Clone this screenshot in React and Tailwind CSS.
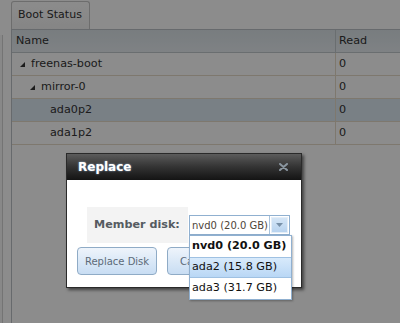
import React from "react";

const ROWS = [
  { name: "freenas-boot", level: 0, expander: true, read: "0" },
  { name: "mirror-0", level: 1, expander: true, read: "0" },
  { name: "ada0p2", level: 2, expander: false, read: "0", selected: true },
  { name: "ada1p2", level: 2, expander: false, read: "0" },
];

const DISKS = ["nvd0 (20.0 GB)", "ada2 (15.8 GB)", "ada3 (31.7 GB)"];

function Expander() {
  return (
    <svg width="5" height="5" viewBox="0 0 5 5" className="shrink-0">
      <polygon points="5,0 5,5 0,5" fill="#333" />
    </svg>
  );
}

function TreeRow({ row }) {
  const indent = ["pl-[8px]", "pl-[18px]", "pl-[38px]"][row.level];
  return (
    <div
      className={`flex h-[23px] border-b border-[#e5dac8] ${row.selected ? "bg-[#dde9f3]" : "bg-white"}`}
    >
      <div className={`flex items-center gap-[6px] w-[324px] border-r border-[#e5dac8] ${indent}`}>
        {row.expander && <Expander />}
        <span>{row.name}</span>
      </div>
      <div className="flex items-center pl-[3px]">{row.read}</div>
    </div>
  );
}

export default function App() {
  return (
    <div className="w-[407px] h-[334px] bg-white">
      <div className="relative w-[400px] h-[323px] bg-white overflow-hidden font-['DejaVu_Sans',sans-serif] text-[11.2px] text-[#333]">
        <div className="flex h-full">
          {/* left pane edge */}
          <div className="w-[11px] shrink-0 pt-[35px] flex">
            <div className="w-[3px] h-full bg-[#f7f7f7] border-r border-[#d4d4d4]" />
          </div>

          <div className="flex-1 flex flex-col min-w-0">
            {/* tab strip */}
            <div className="h-[29px] flex items-end">
              <div className="h-[28px] w-[79px] flex items-center pl-[6px] rounded-t-[3px] border border-b-0 border-[#c6c6c6] bg-gradient-to-b from-white to-[#f3f3f3] text-[11px]">
                Boot Status
              </div>
            </div>

            {/* grid */}
            <div className="flex-1 border-l border-t border-[#bcc2c6] bg-white">
              <div className="flex h-[23px] border-b border-[#c1c8cd] bg-gradient-to-b from-[#dbe3e8] to-[#e7edf1]">
                <div className="w-[324px] flex items-center pl-[4px] border-r border-[#c1c8cd]">Name</div>
                <div className="flex items-center pl-[3px]">Read</div>
              </div>
              {ROWS.map((r) => (
                <TreeRow key={r.name} row={r} />
              ))}
            </div>
          </div>
        </div>

        {/* modal underlay */}
        <div className="absolute inset-0 bg-black/[0.45]" />

        {/* dialog */}
        <div className="absolute left-[66px] top-[153px] w-[236px] h-[135px] border border-[#2a2a2a] bg-white shadow-[2px_2px_3px_rgba(0,0,0,0.55)] flex flex-col">
          <div className="h-[26px] flex items-center justify-between pl-[11px] pr-[13px] bg-gradient-to-b from-[#5c5c5c] via-[#333] to-[#141414]">
            <span className="text-white font-bold text-[12px] [text-shadow:0_0_2px_rgba(170,210,255,0.8)]">
              Replace
            </span>
            <svg width="9" height="8" viewBox="0 0 9 8">
              <path d="M1 1 L8 7 M8 1 L1 7" stroke="#8a96a0" strokeWidth="2" strokeLinecap="round" />
            </svg>
          </div>

          <div className="flex-1 flex flex-col pt-[27px]">
            <div className="flex items-center pl-[20px]">
              <div className="w-[101px] h-[36px] bg-[#f3f3f3] flex items-center pl-[7px] font-bold text-[11.2px] text-[#555b61]">
                Member disk:
              </div>
              <div className="ml-[1px] w-[101px] h-[20px] border border-[#90b0d0] bg-white flex">
                <div className="flex-1 flex items-center pl-[2px] text-[10px] text-[#4d4438] whitespace-nowrap overflow-hidden">
                  nvd0 (20.0 GB)
                </div>
                <div className="w-[20px] border-l border-[#a9c3dc] p-[1px]">
                  <div className="h-full border border-[#e4eef8] bg-gradient-to-b from-[#d4e5f6] to-[#b8d3ef] flex items-center justify-center">
                    <svg width="7" height="4" viewBox="0 0 7 4">
                      <polygon points="0,0 7,0 3.5,4" fill="#7890a8" />
                    </svg>
                  </div>
                </div>
              </div>
            </div>

            <div className="flex gap-[10px] pl-[10px] mt-[4px]">
              <button className="w-[80px] h-[28px] rounded-[4px] border border-[#8fabc6] bg-gradient-to-b from-[#eef4fb] to-[#c8ddf3] text-[10px] text-[#5c6a78] font-['DejaVu_Sans',sans-serif]">
                Replace Disk
              </button>
              <button className="w-[60px] h-[28px] rounded-[4px] border border-[#8fabc6] bg-gradient-to-b from-[#eef4fb] to-[#c8ddf3] text-[10px] text-[#5c6a78] font-['DejaVu_Sans',sans-serif]">
                Cancel
              </button>
            </div>
          </div>
        </div>

        {/* open select list */}
        <div className="absolute left-[189px] top-[235px] w-[103px] border border-[#90b0d0] bg-white shadow-[1px_1px_2px_rgba(0,0,0,0.3)] text-[11.2px] text-[#111]">
          {DISKS.map((d, i) => (
            <div
              key={d}
              className={`h-[21px] flex items-center pl-[2px] whitespace-nowrap ${
                i === 0 ? "font-bold" : ""
              } ${i === 1 ? "bg-gradient-to-b from-[#d8eafb] to-[#b9d7f5] border-y border-[#9fc1e2]" : ""}`}
            >
              {d}
            </div>
          ))}
        </div>
      </div>
    </div>
  );
}
